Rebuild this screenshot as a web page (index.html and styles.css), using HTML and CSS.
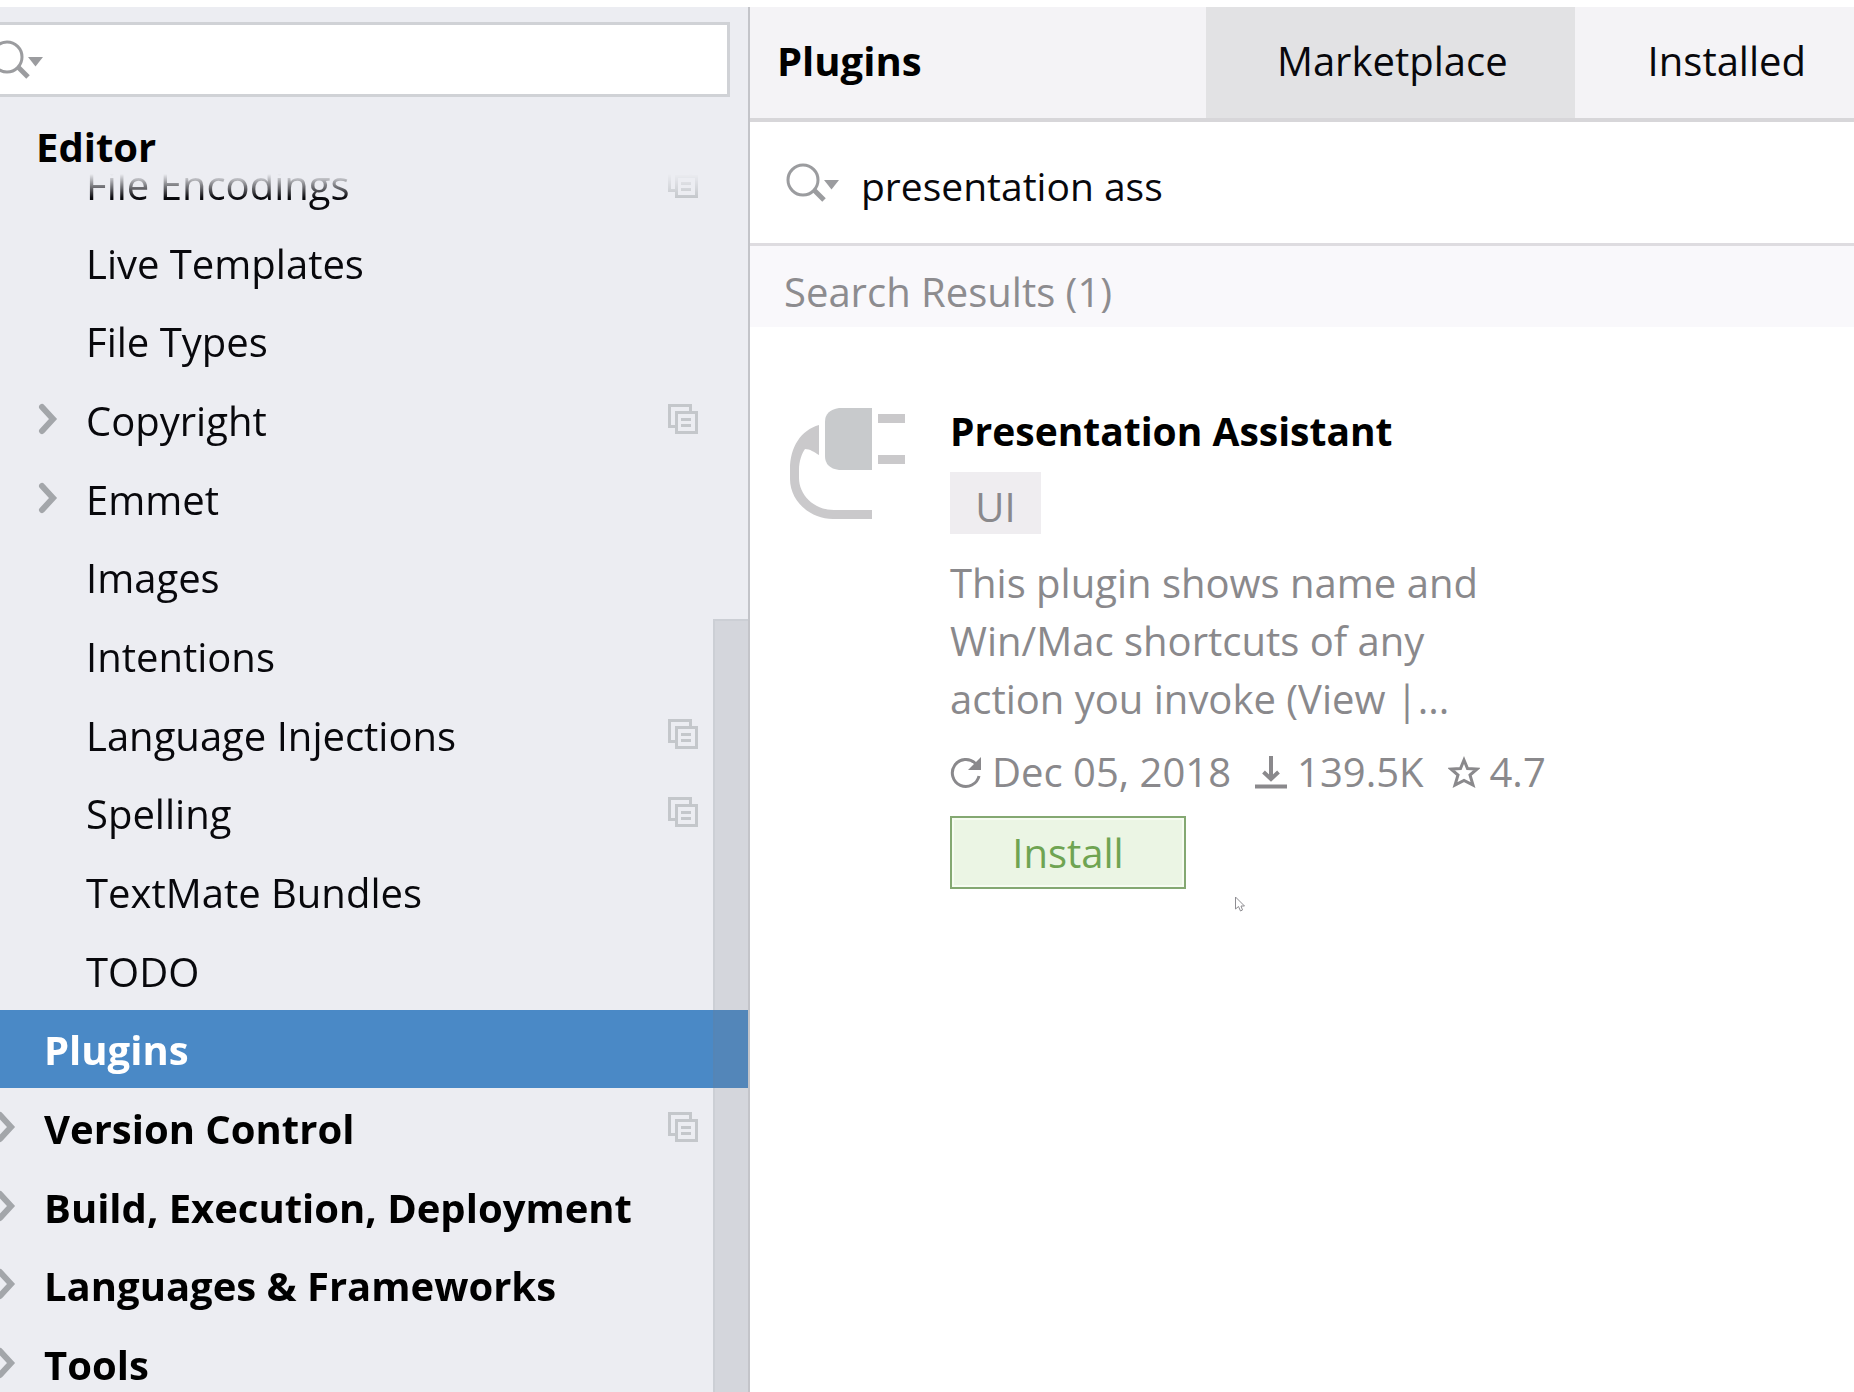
FILE: index.html
```html
<!DOCTYPE html>
<html lang="en">
<head>
<meta charset="utf-8">
<title>Settings – Plugins</title>
<link rel="stylesheet" href="styles.css">
</head>
<body>
<svg class="sprite" aria-hidden="true">
  <symbol id="i-search" viewBox="0 0 54 42">
    <circle cx="17" cy="18" r="15" fill="none" stroke="#9b9c9f" stroke-width="3"/>
    <path d="M28 28l10 10" stroke="#9b9c9f" stroke-width="5" fill="none"/>
    <path d="M38 18h15l-7.500 9.500z" fill="#9b9c9f"/>
  </symbol>
  <symbol id="i-chevron" viewBox="0 0 20 32">
    <path d="M4 4L15 16L4 28" fill="none" stroke="#a3a6aa" stroke-width="6" stroke-linecap="round"/>
  </symbol>
  <symbol id="i-copy" viewBox="0 0 30 30">
    <path d="M7 22.500H1.500v-21h21V7" fill="none" stroke="#c4c7cb" stroke-width="3"/>
    <path d="M8.500 8.500h20v20h-20zM13 15.500h10M13 21.500h10" fill="none" stroke="#c4c7cb" stroke-width="3"/>
  </symbol>
</svg>
<div class="window">
  <aside class="sidebar">
    <label class="filter">
      <svg class="search-icon"><use href="#i-search"/></svg>
      <input type="text" aria-label="Filter settings">
    </label>
    <h2 class="group">Editor</h2>
    <nav class="viewport">
      <ul class="tree">
        <li class="row leaf"><a href="#">File Encodings</a><svg class="copy"><use href="#i-copy"/></svg></li>
        <li class="row leaf"><a href="#">Live Templates</a></li>
        <li class="row leaf"><a href="#">File Types</a></li>
        <li class="row leaf"><svg class="chevron"><use href="#i-chevron"/></svg><a href="#">Copyright</a><svg class="copy"><use href="#i-copy"/></svg></li>
        <li class="row leaf"><svg class="chevron"><use href="#i-chevron"/></svg><a href="#">Emmet</a></li>
        <li class="row leaf"><a href="#">Images</a></li>
        <li class="row leaf"><a href="#">Intentions</a></li>
        <li class="row leaf"><a href="#">Language Injections</a><svg class="copy"><use href="#i-copy"/></svg></li>
        <li class="row leaf"><a href="#">Spelling</a><svg class="copy"><use href="#i-copy"/></svg></li>
        <li class="row leaf"><a href="#">TextMate Bundles</a></li>
        <li class="row leaf"><a href="#">TODO</a></li>
        <li class="row root selected"><a href="#">Plugins</a></li>
        <li class="row root"><svg class="chevron"><use href="#i-chevron"/></svg><a href="#">Version Control</a><svg class="copy"><use href="#i-copy"/></svg></li>
        <li class="row root"><svg class="chevron"><use href="#i-chevron"/></svg><a href="#">Build, Execution, Deployment</a></li>
        <li class="row root"><svg class="chevron"><use href="#i-chevron"/></svg><a href="#">Languages &amp; Frameworks</a></li>
        <li class="row root"><svg class="chevron"><use href="#i-chevron"/></svg><a href="#">Tools</a></li>
      </ul>
    </nav>
    <div class="scrollbar"></div>
  </aside>
  <main class="panel">
    <header class="bar">
      <h1 class="heading">Plugins</h1>
      <button class="tab active" type="button">Marketplace</button>
      <button class="tab" type="button">Installed</button>
    </header>
    <label class="query">
      <svg class="search-icon"><use href="#i-search"/></svg>
      <input type="text" value="presentation ass" aria-label="Search plugins">
    </label>
    <h2 class="results">Search Results (1)</h2>
    <article class="plugin">
      <svg class="logo" viewBox="0 0 118 114">
        <path d="M50 1H83V63H50Q36 61 36 49V15Q36 3 50 1Z" fill="#c8cacc"/>
        <path d="M89 7h27v9h-27zM89 48h27v9h-27z" fill="#cac9cb"/>
        <path d="M30 18C12 23 1 40 1 62V72C1 94 21 112 44 112H83V103H45C24 103 10 87 10 71V63C10 54 13 46 16 42C21 42 25 45 30 48Z" fill="#cac9cb"/>
      </svg>
      <div class="info">
        <h3 class="name">Presentation Assistant</h3>
        <span class="tag">UI</span>
        <p class="about">This plugin shows name and Win/Mac shortcuts of any action you invoke (View |...</p>
        <div class="meta">
          <span class="fact">
            <svg class="meta-icon" viewBox="0 0 32 36"><path d="M25.500 9.500A13.500 13.500 0 1 0 29 22" fill="none" stroke="#8a898c" stroke-width="3"/><path d="M31 3V16H18Z" fill="#8a898c"/></svg>
            Dec 05, 2018</span>
          <span class="fact">
            <svg class="meta-icon" viewBox="0 0 32 36"><path d="M16 2V24M8.500 18L16 25L23.500 18" fill="none" stroke="#8a898c" stroke-width="4"/><path d="M0 32.500H32" fill="none" stroke="#8a898c" stroke-width="4"/></svg>
            139.5K</span>
          <span class="fact">
            <svg class="meta-icon" viewBox="0 0 32 36"><path d="M16 6L19.500 14.500L29 15L22 21L25 31L16 26.500L7 31L10 21L3 15L12.500 14.500Z" fill="none" stroke="#8a898c" stroke-width="3"/></svg>
            4.7</span>
        </div>
        <button class="install" type="button">Install</button>
      </div>
    </article>
  </main>
</div>
<svg class="pointer" viewBox="0 0 12 16"><path d="M1.500 1V13L4.500 10.500L6.500 15L8.500 14L7 10H10.500Z" fill="#fff" stroke="#8e8d92" stroke-width="1"/></svg>
</body>
</html>
```
FILE: styles.css
```css
* { box-sizing: border-box; }

body {
  margin: 0;
  overflow: hidden;
  background: #fff;
  color: #08080c;
  font: 40px/56px "Open Sans", "Noto Sans", sans-serif;
}

h1, h2, h3, p, ul { margin: 0; padding: 0; font-size: inherit; }

a { color: inherit; text-decoration: none; }

button, input {
  border: 0;
  background: none;
  color: inherit;
  font: inherit;
}

.sprite { position: absolute; width: 0; height: 0; }

.window {
  display: grid;
  grid-template-columns: 750px 1fr;
  height: 100vh;
  padding-top: 7px;
}

/* Settings tree */
.sidebar {
  position: relative;
  display: flex;
  flex-direction: column;
  min-height: 0;
  padding-top: 15px;
  border-right: 2px solid #c3c4c9;
  background: #ecedf2;
}

.filter {
  display: flex;
  align-items: center;
  height: 75px;
  margin-right: 18px;
  border: solid #d0d2d6;
  border-width: 3px 3px 3px 0;
  background: #fff;
}

.filter .search-icon { margin-left: -10px; }

.filter input { flex: 1; min-width: 0; outline: 0; }

.search-icon { flex: none; width: 54px; height: 42px; }

.group {
  height: 77px;
  padding: 22px 0 0 36px;
  color: #000;
  font-weight: 700;
}

.viewport {
  flex: 1;
  min-height: 0;
  overflow: hidden;
  -webkit-mask-image: linear-gradient(transparent, #000 24px);
  mask-image: linear-gradient(transparent, #000 24px);
}

.tree { margin-top: -30px; list-style: none; }

.row {
  display: flex;
  align-items: center;
  height: 79px;
  padding: 0 50px 2px 0;
}

.row:nth-child(3n) { height: 78px; }

.row a { flex: 1; padding-top: 4px; white-space: nowrap; }

.row.leaf { padding-left: 86px; }
.row.root { padding-left: 44px; color: #000; font-weight: 700; }

.chevron { flex: none; width: 20px; height: 32px; margin: 0 28px 0 -48px; }

.copy { flex: none; width: 30px; height: 30px; }

.selected { background: #4a89c6; }
.selected a { color: #fff; }

.scrollbar {
  position: absolute;
  top: 612px;
  right: 0;
  bottom: 0;
  width: 35px;
  border: solid rgba(120, 124, 134, .08);
  border-width: 2px 0 0 2px;
  background: rgba(120, 124, 134, .2);
}

/* Plugin manager */
.panel { min-width: 0; }

.bar {
  display: flex;
  height: 115px;
  border-bottom: 4px solid #d7d6d9;
  background: #f4f3f6;
}

.heading {
  flex: 1;
  padding: 26px 0 0 27px;
  color: #000;
  font-weight: 700;
}

.tab { padding: 0 48px 4px 73px; }

.active { padding: 0 67px 4px 71px; background: #e2e2e4; }

.query {
  display: flex;
  align-items: center;
  height: 124px;
  padding-left: 36px;
  border-bottom: 3px solid #dedce0;
}

.query input {
  flex: 1;
  padding: 6px 0 0 21px;
  outline: 0;
  font-size: 39px;
}

.results {
  height: 81px;
  padding: 18px 0 0 34px;
  background: #f9f8fb;
  color: #8d8c8f;
  font-weight: 400;
}

.plugin {
  display: flex;
  gap: 43px;
  padding: 76px 40px 0 39px;
}

.logo { flex: none; width: 118px; height: 114px; margin-top: 4px; }

.info { color: #8a898c; }

.name { color: #000; font-size: 39px; font-weight: 700; }

.tag {
  display: block;
  width: 91px;
  height: 62px;
  margin: 13px 0 20px;
  padding-top: 7px;
  background: #efedf0;
  text-align: center;
}

.about { max-width: 560px; line-height: 58px; }

.meta { display: flex; gap: 24px; margin: 16px 0; }

.fact { display: flex; align-items: center; gap: 10px; white-space: nowrap; }

.meta-icon { flex: none; width: 32px; height: 36px; }

.install {
  display: block;
  width: 236px;
  height: 73px;
  padding: 0;
  border: 2px solid #84a872;
  background: #ebf5e4;
  box-shadow: inset 0 0 0 2px #f6fcf1;
  color: #6fa452;
}

/* Mouse pointer over the page */
.pointer {
  position: absolute;
  top: 896px;
  left: 1234px;
  width: 12px;
  height: 16px;
}
```
